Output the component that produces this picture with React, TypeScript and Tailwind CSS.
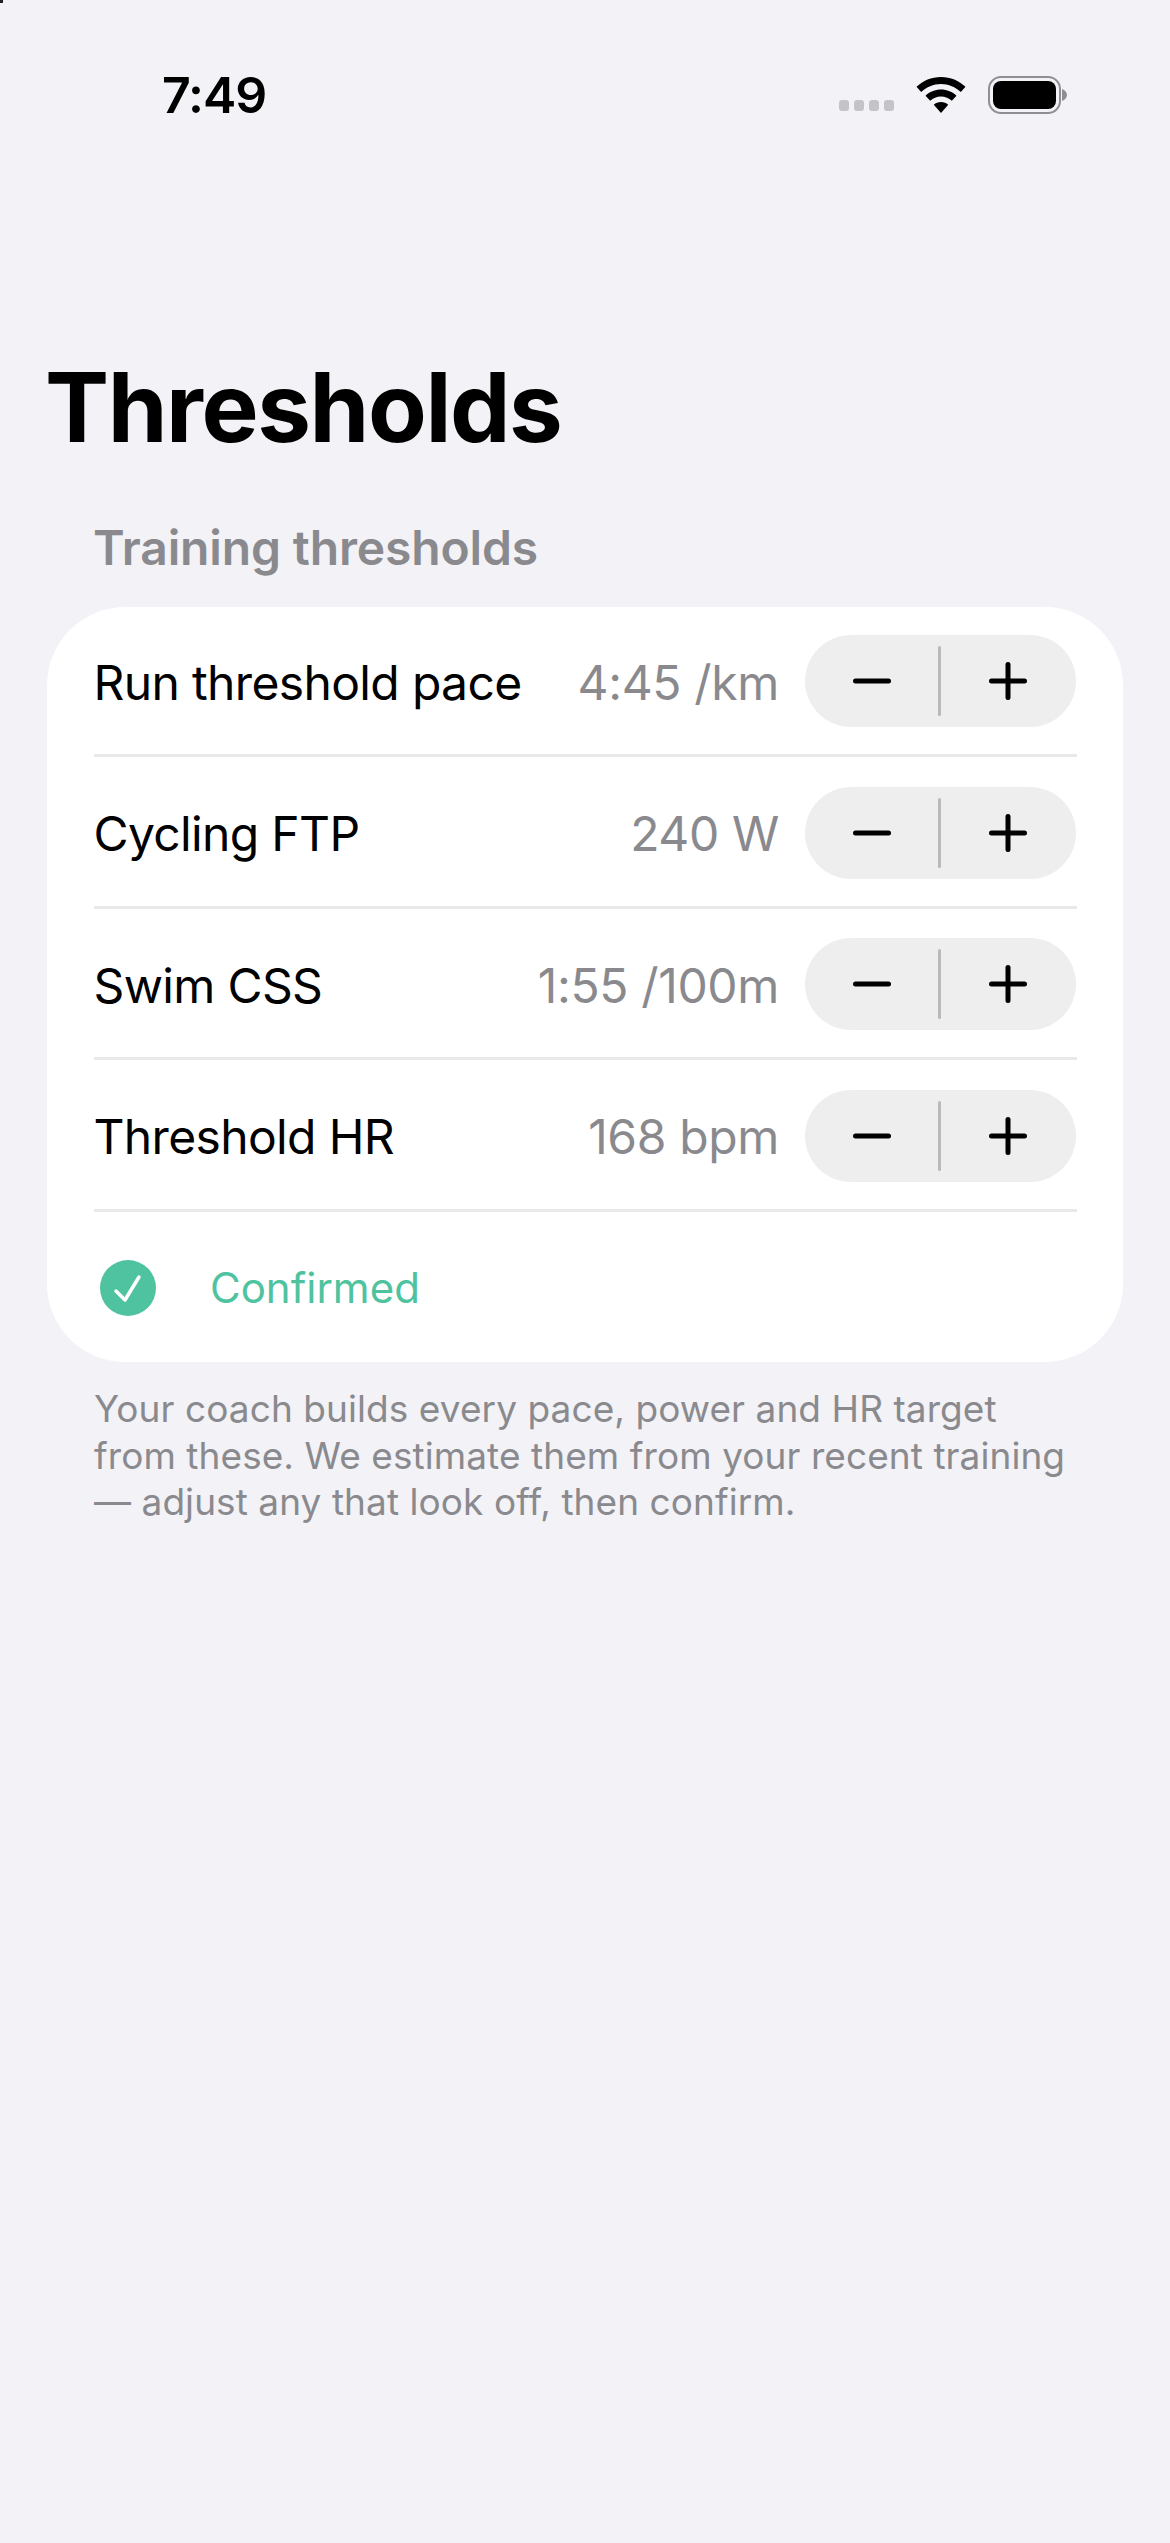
const rows = [
  { label: "Run threshold pace", value: "4:45 /km" },
  { label: "Cycling FTP", value: "240 W" },
  { label: "Swim CSS", value: "1:55 /100m" },
  { label: "Threshold HR", value: "168 bpm" },
];

function Stepper() {
  return (
    <div className="mr-[0.500px] flex h-[92px] w-[271px] shrink-0 items-center rounded-[46px] bg-[#eeeeef]">
      <div className="flex flex-1 items-center justify-center">
        <svg width="38" height="6" viewBox="0 0 38 6"><path d="M2.5 3H35.5" stroke="#000" strokeWidth="5" strokeLinecap="round" /></svg>
      </div>
      <div className="h-[70px] w-[3px] rounded-full bg-[#b9b9bb]" />
      <div className="flex flex-1 items-center justify-center pr-[2px]">
        <svg width="38" height="38" viewBox="0 0 38 38"><path d="M2.5 19H35.5M19 2.5V35.5" stroke="#000" strokeWidth="5" strokeLinecap="round" /></svg>
      </div>
    </div>
  );
}

function Wifi() {
  return (
    <svg width="50" height="36" viewBox="0 0 50 36">
      <path d="M25 0C34.500 0 43 3.700 49.500 9.800L44.800 15C39.500 10 32.600 7 25 7S10.500 10 5.200 15L.5 9.800C7 3.700 15.500 0 25 0Z" fill="#000" />
      <path d="M25 12.500C31 12.500 36.400 14.800 40.500 18.700L35.800 23.800C33 21.100 29.200 19.500 25 19.500S17 21.100 14.200 23.800L9.500 18.700C13.600 14.800 19 12.500 25 12.500Z" fill="#000" />
      <path d="M25 25C27.800 25 30.300 26 32.200 27.800L25 36L17.800 27.800C19.700 26 22.200 25 25 25Z" fill="#000" />
    </svg>
  );
}

function Battery() {
  return (
    <div className="flex items-center">
      <div className="h-[38px] w-[73px] rounded-[13px] border-[2.500px] border-[#8e8e93] p-[3px]">
        <div className="h-full w-full rounded-[8px] bg-black" />
      </div>
      <svg className="ml-[1px]" width="5" height="12" viewBox="0 0 5 12"><path d="M0 0C3 1 5 3.500 5 6S3 11 0 12Z" fill="#8e8e93" /></svg>
    </div>
  );
}

export default function App() {
  return (
    <div className="relative h-[2543px] w-[1170px] overflow-hidden bg-[#f2f2f7] font-['Inter',sans-serif] text-black">
      <div className="absolute left-0 top-0 h-[3px] w-[3px] bg-[#222222]" />
      <div className="flex h-[190px] items-start justify-between pl-[162px] pr-[103px] pt-[65px]">
        <span className="text-[50px] font-semibold leading-[60px] tracking-[-1px]">7:49</span>
        <div className="flex items-center pt-[11px]">
          <div className="mt-[20px] mr-[22px] flex gap-[5px]">
            <div className="h-[11px] w-[10px] rounded-[3px] bg-[#c4c4c8]" />
            <div className="h-[11px] w-[10px] rounded-[3px] bg-[#c4c4c8]" />
            <div className="h-[11px] w-[10px] rounded-[3px] bg-[#c4c4c8]" />
            <div className="h-[11px] w-[10px] rounded-[3px] bg-[#c4c4c8]" />
          </div>
          <Wifi />
          <div className="ml-[22px]"><Battery /></div>
        </div>
      </div>
      <div className="px-[47px]">
        <h1 className="-ml-[2px] pt-[155px] text-[96px] font-bold leading-[124px] tracking-[-1.400px]">Thresholds</h1>
        <h2 className="mt-[48px] px-[46px] text-[48px] font-semibold leading-[62px] tracking-[-0.150px] text-[#8a8a8e]">Training thresholds</h2>
        <div className="mt-[28px] rounded-[78px] bg-white px-[46.500px]">
          {rows.map((r) => (
            <div key={r.label} className="mb-[1.500px] flex items-center border-b-[3px] border-[#e9e9ea] pb-[27px] pt-[28px]">
              <span className="flex-1 pt-[3px] text-[48px] leading-[62px] tracking-[-0.650px]">{r.label}</span>
              <span className="mr-[26px] pt-[3px] text-[48px] leading-[62px] tracking-[-0.350px] text-[#8a8a8e]">{r.value}</span>
              <Stepper />
            </div>
          ))}
          <div className="flex h-[149px] items-center pl-[6.500px]">
            <svg width="56" height="56" viewBox="0 0 56 56">
              <circle cx="28" cy="28" r="28" fill="#4fc39f" />
              <path d="M16 31L25 40L39 17" fill="none" stroke="#fff" strokeWidth="3.500" strokeLinecap="round" strokeLinejoin="round" />
            </svg>
            <span className="ml-[54px] text-[42px] leading-[54px] text-[#4fc39f]">Confirmed</span>
          </div>
        </div>
        <p className="mt-[24px] px-[47px] text-[37px] leading-[46.500px] tracking-[0.070px] text-[#8a8a8e]">
          Your coach builds every pace, power and HR target from these. We estimate them from your recent training — adjust any that look off, then confirm.
        </p>
      </div>
    </div>
  );
}
